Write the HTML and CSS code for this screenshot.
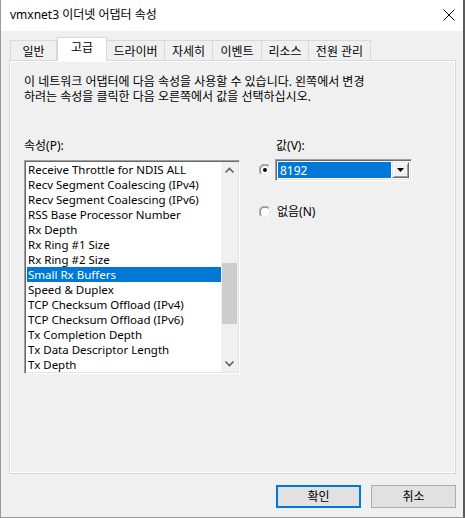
FILE: index.html
```html
<!DOCTYPE html>
<html lang="ko">
<head>
<meta charset="utf-8">
<title>vmxnet3 이더넷 어댑터 속성</title>
<link rel="stylesheet" href="styles.css">
</head>
<body>
<div class="window">
  <div class="titlebar">
    <span class="title">vmxnet3 이더넷 어댑터 속성</span>
    <svg class="close" width="12" height="12" viewBox="0 0 12 12"><path d="M0.5 0.5 L11.5 11.5 M11.5 0.5 L0.5 11.5" stroke="#000" stroke-width="1" fill="none"/></svg>
  </div>
  <div class="client">
    <div class="tabs">
      <div class="tab w1">일반</div>
      <div class="tab w2 active">고급</div>
      <div class="tab w3">드라이버</div>
      <div class="tab w4">자세히</div>
      <div class="tab w5">이벤트</div>
      <div class="tab w6">리소스</div>
      <div class="tab w7">전원 관리</div>
    </div>
    <div class="panel">
      <p class="desc"><span class="line">이 네트워크 어댑터에 다음 속성을 사용할 수 있습니다. 왼쪽에서 변경</span><span class="line">하려는 속성을 클릭한 다음 오른쪽에서 값을 선택하십시오.</span></p>
      <div class="columns">
        <div class="leftcol">
          <div class="label">속성(P):</div>
          <div class="listbox">
            <ul class="items">
              <li>Receive Throttle for NDIS ALL</li>
              <li>Recv Segment Coalescing (IPv4)</li>
              <li>Recv Segment Coalescing (IPv6)</li>
              <li>RSS Base Processor Number</li>
              <li>Rx Depth</li>
              <li>Rx Ring #1 Size</li>
              <li>Rx Ring #2 Size</li>
              <li class="sel">Small Rx Buffers</li>
              <li>Speed &amp; Duplex</li>
              <li>TCP Checksum Offload (IPv4)</li>
              <li>TCP Checksum Offload (IPv6)</li>
              <li>Tx Completion Depth</li>
              <li>Tx Data Descriptor Length</li>
              <li>Tx Depth</li>
            </ul>
            <div class="scrollbar">
              <svg class="arrow" width="17" height="17" viewBox="0 0 17 17"><path d="M4.5 10.5 L8.5 6.5 L12.5 10.5" stroke="#606060" stroke-width="1.6" fill="none"/></svg>
              <div class="track"><div class="thumb"></div></div>
              <svg class="arrow" width="17" height="17" viewBox="0 0 17 17"><path d="M4.5 6.5 L8.5 10.5 L12.5 6.5" stroke="#606060" stroke-width="1.6" fill="none"/></svg>
            </div>
          </div>
        </div>
        <div class="rightcol">
          <div class="label">값(V):</div>
          <div class="optrow first">
            <svg class="radio" width="12" height="12" viewBox="0 0 12 12">
              <circle cx="6" cy="6" r="5.5" fill="#fff"/>
              <path d="M1.6 10.4 A5.5 5.5 0 0 1 10.4 1.6" stroke="#a0a0a0" stroke-width="1" fill="none"/>
              <path d="M2.5 9.5 A4.5 4.5 0 0 1 9.5 2.5" stroke="#696969" stroke-width="1" fill="none"/>
              <path d="M10.4 1.6 A5.5 5.5 0 0 1 1.6 10.4" stroke="#ffffff" stroke-width="1" fill="none"/>
              <path d="M9.5 2.5 A4.5 4.5 0 0 1 2.5 9.5" stroke="#e3e3e3" stroke-width="1" fill="none"/>
              <circle cx="6" cy="6" r="2" fill="#000"/>
            </svg>
            <div class="combo">
              <div class="combo-value">8192</div>
              <div class="combo-btn"><svg width="9" height="5" viewBox="0 0 9 5"><path d="M1 0 H8 L4.5 4 Z" fill="#000"/></svg></div>
            </div>
          </div>
          <div class="optrow second">
            <svg class="radio" width="12" height="12" viewBox="0 0 12 12">
              <circle cx="6" cy="6" r="5.5" fill="#fff"/>
              <path d="M1.6 10.4 A5.5 5.5 0 0 1 10.4 1.6" stroke="#a0a0a0" stroke-width="1" fill="none"/>
              <path d="M2.5 9.5 A4.5 4.5 0 0 1 9.5 2.5" stroke="#696969" stroke-width="1" fill="none"/>
              <path d="M10.4 1.6 A5.5 5.5 0 0 1 1.6 10.4" stroke="#ffffff" stroke-width="1" fill="none"/>
              <path d="M9.5 2.5 A4.5 4.5 0 0 1 2.5 9.5" stroke="#e3e3e3" stroke-width="1" fill="none"/>
            </svg>
            <span class="optlabel">없음(N)</span>
          </div>
        </div>
      </div>
    </div>
    <div class="buttons">
      <button class="btn default">확인</button>
      <button class="btn">취소</button>
    </div>
  </div>
</div>
</body>
</html>
```
FILE: styles.css
```css
* { box-sizing: border-box; }
html, body { margin: 0; padding: 0; }
body {
  width: 465px;
  height: 518px;
  font-family: "Noto Sans", "Noto Sans CJK KR", sans-serif;
  font-size: 12px;
  color: #000;
  background: #f0f0f0;
  overflow: hidden;
}
.window {
  width: 465px;
  height: 518px;
  display: flex;
  flex-direction: column;
  border-left: 1px solid #9a9a9a;
  border-right: 2px solid #5a5a5a;
  border-bottom: 1px solid #9a9a9a;
  background: #f0f0f0;
}
.titlebar {
  height: 31px;
  background: #fff;
  display: flex;
  align-items: center;
  justify-content: space-between;
  padding: 0 8px 1px 9px;
  flex: none;
}
.title {
  font-size: 12px;
  line-height: 16px;
}
.close { display: block; }
.client {
  flex: 1;
  display: flex;
  flex-direction: column;
  padding: 8px 7px 0 8px;
}
.tabs {
  display: flex;
  align-items: flex-end;
  height: 22px;
  padding-left: 1px;
  margin-bottom: -1px;
}
.tab {
  height: 21px;
  border: 1px solid #d9d9d9;
  border-left: none;
  background: #f0f0f0;
  display: flex;
  align-items: center;
  justify-content: center;
  line-height: 16px;
  padding-top: 3px;
}
.tab.w1 { border-left: 1px solid #d9d9d9; width: 47px; }
.tab.w2 { width: 50px; }
.tab.w3 { width: 58px; }
.tab.w4 { width: 48px; }
.tab.w5 { width: 49px; }
.tab.w6 { width: 47px; }
.tab.w7 { width: 62px; }
.tab.active {
  height: 24px;
  background: #fff;
  border-left: 1px solid #d9d9d9;
  border-bottom: none;
  position: relative;
  z-index: 1;
  padding-top: 0;
  padding-bottom: 3px;
}
.panel {
  width: 447px;
  height: 414px;
  border: 1px solid #d9d9d9;
  box-shadow: inset 0 0 0 1px #fff;
  background: #f0f0f0;
  padding: 13px 14px 0 14px;
  flex: none;
}
.desc {
  margin: 0;
  font-size: 12px;
  display: flex;
  flex-direction: column;
}
.desc .line {
  display: block;
  height: 15px;
  line-height: 15px;
  white-space: nowrap;
}
.columns {
  display: flex;
  margin-top: 34px;
}
.leftcol { width: 216px; }
.label { line-height: 16px; height: 16px; }
.listbox {
  margin-top: 6px;
  width: 216px;
  height: 214px;
  border-style: solid;
  border-width: 1px;
  border-color: #a0a0a0 #ffffff #ffffff #a0a0a0;
  display: flex;
  background: #fff;
  box-shadow: inset 1px 1px 0 #696969, inset -1px -1px 0 #e3e3e3;
  padding: 1px 1px 1px 2px;
}
.items {
  list-style: none;
  margin: 0;
  padding: 0;
  flex: 1;
  overflow: hidden;
  font-size: 11.5px;
}
.items li {
  height: 15px;
  line-height: 15px;
  padding-left: 1px;
  white-space: nowrap;
}
.items li.sel { background: #0078d7; color: #fff; }
.scrollbar {
  width: 17px;
  display: flex;
  flex-direction: column;
  background: #f0f0f0;
}
.arrow { display: block; flex: none; }
.track { flex: 1; padding: 84px 1px 0 1px; }
.thumb { height: 61px; background: #cdcdcd; }
.rightcol {
  margin-left: 19px;
  width: 180px;
}
.rightcol .label { padding-left: 17px; }
.optrow { display: flex; align-items: center; }
.optrow.first { margin-top: 5px; }
.optrow.second { margin-top: 23px; }
.radio { display: block; flex: none; }
.combo {
  margin-left: 4px;
  width: 137px;
  height: 22px;
  display: flex;
  border-style: solid;
  border-width: 1px;
  border-color: #a0a0a0 #ffffff #ffffff #a0a0a0;
  box-shadow: inset 1px 1px 0 #696969, inset -1px -1px 0 #e3e3e3;
  padding: 2px;
  background: #fff;
}
.combo-value {
  flex: 1;
  background: #0078d7;
  color: #fff;
  line-height: 17px;
  padding-left: 2px;
}
.combo-btn {
  width: 17px;
  margin-left: 1px;
  background: #f0f0f0;
  border-style: solid;
  border-width: 1px;
  border-color: #e3e3e3 #696969 #696969 #e3e3e3;
  box-shadow: inset 1px 1px 0 #fff, inset -1px -1px 0 #a0a0a0;
  display: flex;
  align-items: center;
  justify-content: center;
}
.combo-btn svg { display: block; }
.optlabel { margin-left: 6px; line-height: 16px; }
.buttons {
  display: flex;
  justify-content: flex-end;
  gap: 10px;
  margin-top: 11px;
}
.btn {
  width: 85px;
  height: 23px;
  font-family: "Noto Sans", "Noto Sans CJK KR", sans-serif;
  font-size: 12px;
  background: #e1e1e1;
  border: 1px solid #adadad;
  padding: 0;
  color: #000;
  line-height: 16px;
}
.btn.default { border: 2px solid #0078d7; }
```
